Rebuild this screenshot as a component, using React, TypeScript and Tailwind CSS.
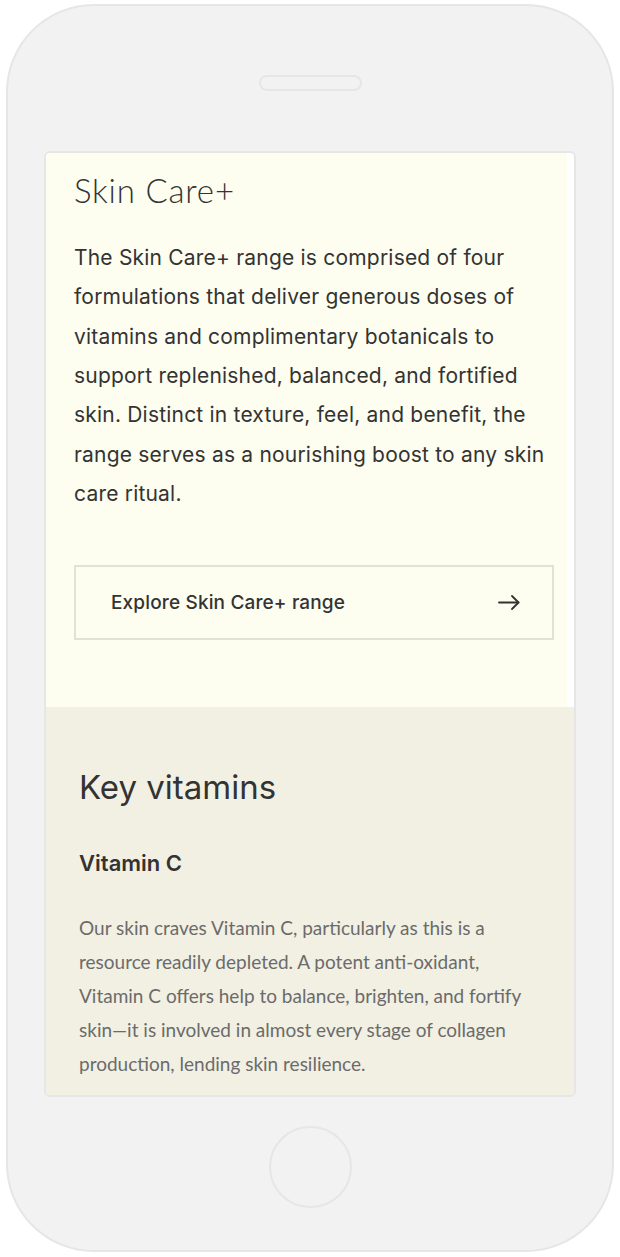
import React from "react";

export default function App() {
  return (
    <div className="w-[620px] h-[1257px] bg-white pt-[4px] pl-[6px]">
      <div className="w-[608px] h-[1248px] rounded-[88px] border-2 border-[#e6e6e6] bg-[#f2f2f2] flex flex-col items-center">
        <div className="mt-[69px] w-[103px] h-[16px] rounded-full border-2 border-[#e6e6e6]" />
        <div className="mt-[60px] w-[532px] h-[946px] rounded-[6px] border-2 border-[#e6e6e6] bg-white overflow-hidden flex flex-col">
          <section className="h-[554px] mr-[7px] bg-[#fdfdf0] pl-[28px] pt-[17px]">
            <h1 className="font-['Lato',sans-serif] font-light text-[33px] leading-[40px] tracking-[0.8px] text-[#333333]">
              Skin Care+
            </h1>
            <p className="mt-[28px] font-['Inter',sans-serif] text-[21px] leading-[39.33px] tracking-[0.2px] text-[#333333] whitespace-nowrap">
              The Skin Care+ range is comprised of four
              <br />
              formulations that deliver generous doses of
              <br />
              vitamins and complimentary botanicals to
              <br />
              support replenished, balanced, and fortified
              <br />
              skin. Distinct in texture, feel, and benefit, the
              <br />
              range serves as a nourishing boost to any skin
              <br />
              care ritual.
            </p>
            <button className="mt-[52px] w-[480px] h-[75px] border-2 border-[#e2e1d5] flex items-center justify-between pl-[35px] pr-[32px] text-left">
              <span className="font-['Inter',sans-serif] font-medium text-[19px] tracking-[0.15px] text-[#333333]">
                Explore Skin Care+ range
              </span>
              <svg width="22" height="15" viewBox="0 0 22 15" fill="none" stroke="#333333" strokeWidth="1.8" strokeLinecap="round" strokeLinejoin="round">
                <path d="M1 7.5H20.5" />
                <path d="M14 1L20.5 7.5L14 14" />
              </svg>
            </button>
          </section>
          <section className="flex-1 bg-[#f2f0e3] pl-[33px] pt-[60px]">
            <h2 className="font-['Inter',sans-serif] text-[33px] leading-[40px] text-[#333333]">
              Key vitamins
            </h2>
            <h3 className="mt-[42px] font-['Inter',sans-serif] font-semibold text-[22px] leading-[28px] text-[#333333]">
              Vitamin C
            </h3>
            <p className="mt-[34px] font-['Lato',sans-serif] text-[19px] leading-[34px] text-[#6b6b6b] whitespace-nowrap">
              Our skin craves Vitamin C, particularly as this is a
              <br />
              resource readily depleted. A potent anti-oxidant,
              <br />
              Vitamin C offers help to balance, brighten, and fortify
              <br />
              skin—it is involved in almost every stage of collagen
              <br />
              production, lending skin resilience.
            </p>
          </section>
        </div>
        <div className="mt-[29px] w-[83px] h-[82px] rounded-full border-2 border-[#e6e6e6]" />
      </div>
    </div>
  );
}
